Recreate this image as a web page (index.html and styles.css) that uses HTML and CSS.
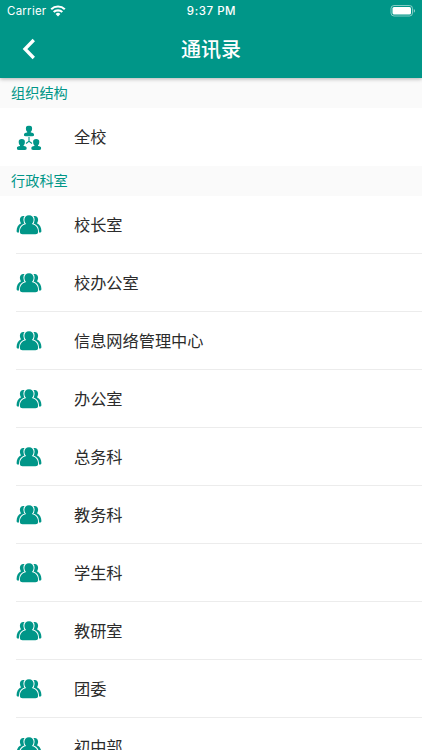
FILE: index.html
```
<!DOCTYPE html>
<html lang="zh-CN">
<head>
<meta charset="utf-8">
<title>通讯录</title>
<link rel="stylesheet" href="styles.css">
</head>
<body>
<svg class="defs" aria-hidden="true">
  <symbol id="group" viewBox="0 0 26 22">
    <path d="M9 2.300C6.200 1.200 3.900 2.800 3.900 5.600c0 1.600.4 2.700 1.200 3.600C2.200 10.400.6 13.200.6 17c0 1 .6 1.500 1.500 1.500h1.600L9.500 11z"/>
    <path d="M17 2.300c2.800-1.100 5.100.5 5.100 3.300 0 1.600-.4 2.700-1.200 3.600 2.900 1.200 4.500 4 4.500 7.800 0 1-.6 1.500-1.500 1.500h-1.600L16.500 11z"/>
    <path class="front" d="M13 1.200c2.800 0 4.600 1.800 4.600 4.500 0 1.900-.7 3.400-1.800 4.400 4 .9 6.300 3.800 6.300 7.700 0 1.700-1 2.500-2.700 2.500H6.600c-1.700 0-2.700-.8-2.700-2.500 0-3.900 2.300-6.800 6.300-7.700-1.100-1-1.800-2.500-1.800-4.400 0-2.700 1.800-4.500 4.600-4.500z"/>
  </symbol>
  <symbol id="person" viewBox="0 0 10 11">
    <path d="M5 0c2.100 0 3.100.9 3.100 2.700 0 1.700-.5 2.900-1.300 3.500v.7c2.200.2 3.200.9 3.200 2.100v.5c0 1-.8 1.400-1.800 1.400H1.800C.8 10.900 0 10.500 0 9.500V9c0-1.200 1-1.900 3.200-2.100v-.7C2.400 5.600 1.900 4.400 1.900 2.700 1.900.9 2.900 0 5 0z"/>
  </symbol>
</svg>
<header class="header">
  <div class="status">
    <div class="status-left"><span>Carrier</span>
      <svg class="wifi" viewBox="0 0 16 12"><g fill="none" stroke="#fff" stroke-width="2.100"><path d="M1.200 4.300a9.800 9.800 0 0 1 13.600 0"/><path d="M3.700 7.100a6.100 6.100 0 0 1 8.600 0"/></g><path fill="#fff" d="M5.600 9a3.400 3.400 0 0 1 4.800 0L8 11.500z"/></svg>
    </div>
    <div class="time">9:37 PM</div>
    <svg class="battery" viewBox="0 0 26 12"><rect x="1" y=".5" width="21.500" height="10.500" rx="3" fill="none" stroke="#fff" stroke-opacity=".5"/><rect x="2.500" y="2" width="18.500" height="7.500" rx="1.500" fill="#fff"/><path d="M23.800 4v3.700c1.600-.6 1.600-3.100 0-3.700z" fill="#fff" fill-opacity=".6"/></svg>
  </div>
  <div class="navbar">
    <svg class="back" viewBox="0 0 14 22"><path d="M11.800 2 3 11l8.800 9" fill="none" stroke="#fff" stroke-width="3.300"/></svg>
    <h1 class="title">通讯录</h1>
  </div>
</header>
<main>
  <h2 class="section">组织结构</h2>
  <ul class="list">
    <li class="row"><svg class="icon" viewBox="0 0 26 26"><use href="#person" x="8" y="1.500" width="10" height="11"/><use href="#person" x=".8" y="15" width="10" height="11"/><use href="#person" x="15.200" y="15" width="10" height="11"/><path d="M13 13v4.200l-3 2.300M13 17.200l3 2.300" stroke="#009688" stroke-width="1.100" fill="none"/></svg><span class="label">全校</span></li>
  </ul>
  <h2 class="section">行政科室</h2>
  <ul class="list">
    <li class="row"><svg class="icon people"><use href="#group"/></svg><span class="label">校长室</span></li>
    <li class="row"><svg class="icon people"><use href="#group"/></svg><span class="label">校办公室</span></li>
    <li class="row"><svg class="icon people"><use href="#group"/></svg><span class="label">信息网络管理中心</span></li>
    <li class="row"><svg class="icon people"><use href="#group"/></svg><span class="label">办公室</span></li>
    <li class="row"><svg class="icon people"><use href="#group"/></svg><span class="label">总务科</span></li>
    <li class="row"><svg class="icon people"><use href="#group"/></svg><span class="label">教务科</span></li>
    <li class="row"><svg class="icon people"><use href="#group"/></svg><span class="label">学生科</span></li>
    <li class="row"><svg class="icon people"><use href="#group"/></svg><span class="label">教研室</span></li>
    <li class="row"><svg class="icon people"><use href="#group"/></svg><span class="label">团委</span></li>
    <li class="row"><svg class="icon people"><use href="#group"/></svg><span class="label">初中部</span></li>
  </ul>
</main>
</body>
</html>
```
FILE: styles.css
```
* { box-sizing: border-box; }
html, body { height: 100%; }
body {
  margin: 0;
  display: flex;
  flex-direction: column;
  overflow: hidden;
  background: #fff;
  color: #2b2b2b;
  font-family: Inter, "Noto Sans CJK SC", sans-serif;
}
.defs { display: none; }
.header {
  flex: none;
  position: relative;
  z-index: 1;
  height: 78px;
  background: #009688;
  color: #fff;
  box-shadow: 0 1px 4px rgba(0, 0, 0, .3);
}
.status {
  display: grid;
  grid-template-columns: 1fr auto 1fr;
  align-items: center;
  height: 22px;
  padding: 0 6px 0 7px;
  font-size: 11.5px;
  line-height: 22px;
}
.status-left { display: flex; align-items: center; gap: 4px; letter-spacing: .25px; }
.wifi { width: 16px; height: 12px; }
.time { font-weight: 500; letter-spacing: .55px; }
.battery { width: 26px; height: 12px; justify-self: end; }
.navbar {
  display: grid;
  grid-template-columns: 58px 1fr 58px;
  align-items: center;
  height: 55px;
}
.back { width: 14px; height: 22px; margin: -1px 0 0 22px; }
.title {
  margin: 0;
  text-align: center;
  font-size: 20px;
  line-height: 28px;
  font-weight: 500;
}
main { flex: 1; min-height: 0; overflow: hidden; }
.section {
  margin: 0;
  height: 30px;
  padding-left: 11px;
  background: #fafafa;
  color: #009688;
  font-size: 14.2px;
  line-height: 30px;
  font-weight: 400;
}
.list { margin: 0; padding: 0; list-style: none; }
.row {
  display: flex;
  align-items: center;
  height: 58px;
  padding-left: 16px;
  background: linear-gradient(#ececec, #ececec) 16px 57px / 100% 1px no-repeat;
}
.row:last-child { background: none; }
.icon { width: 26px; height: 26px; fill: #009688; }
.people { height: 22px; }
.front { stroke: #fff; stroke-width: 2px; paint-order: stroke; }
.label {
  margin-left: 32px;
  font-size: 16.2px;
  line-height: 24px;
}
```
